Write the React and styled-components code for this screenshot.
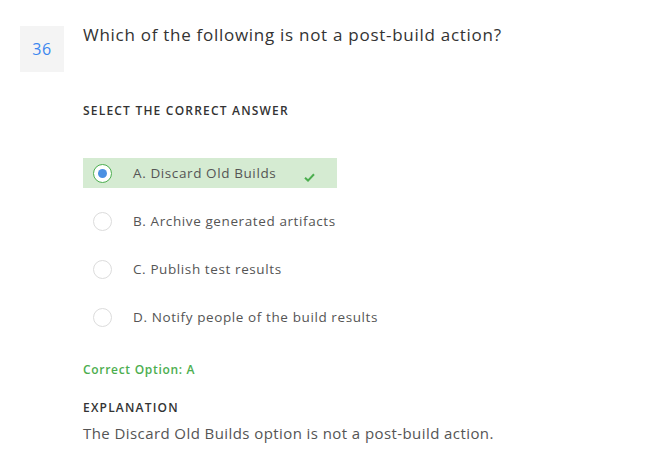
import React from 'react';
import styled, { createGlobalStyle } from 'styled-components';

const GlobalStyle = createGlobalStyle`
  body {
    margin: 0;
    background: #fff;
    font-family: 'Open Sans', 'Liberation Sans', sans-serif;
  }
`;

const Page = styled.div`
  padding: 26px 20px 20px 20px;
`;

const QuestionRow = styled.div`
  display: flex;
  align-items: flex-start;
`;

const NumberBox = styled.div`
  width: 44px;
  height: 46px;
  background: #f4f4f4;
  color: #3b86ef;
  font-size: 16px;
  letter-spacing: 0.5px;
  display: flex;
  align-items: center;
  justify-content: center;
  flex-shrink: 0;
`;

const QuestionText = styled.h1`
  margin: -3px 0 0 19px;
  font-size: 17px;
  font-weight: 400;
  color: #333;
  line-height: 24px;
  letter-spacing: 0.72px;
`;

const Body = styled.div`
  padding-left: 63px;
`;

const Label = styled.div`
  font-size: 12px;
  font-weight: 600;
  color: #333;
  text-transform: uppercase;
  letter-spacing: 1.2px;
  margin-top: ${(p) => p.$top}px;
`;

const Options = styled.div`
  display: flex;
  flex-direction: column;
  align-items: flex-start;
  gap: 18px;
  margin-top: 39px;
`;

const Option = styled.div`
  display: flex;
  align-items: center;
  height: 30px;
  padding: 0 22px 0 10px;
  background: ${(p) => (p.$correct ? '#d5ebd2' : 'transparent')};
`;

const Radio = styled.span`
  width: 19px;
  height: 19px;
  border-radius: 50%;
  box-sizing: border-box;
  border: 1px solid ${(p) => (p.$checked ? '#4cae4f' : '#dcdcdc')};
  background: #fff;
  display: flex;
  align-items: center;
  justify-content: center;
  flex-shrink: 0;

  &::after {
    content: '';
    display: ${(p) => (p.$checked ? 'block' : 'none')};
    width: 9px;
    height: 9px;
    border-radius: 50%;
    background: #4a90e2;
  }
`;

const OptionText = styled.span`
  margin-left: 21px;
  font-size: 13.5px;
  color: #555;
  letter-spacing: 0.6px;
`;

const Check = styled.svg`
  margin-left: 28px;
  margin-top: 8px;
`;

const CorrectNote = styled.div`
  margin-top: 29px;
  font-size: 12px;
  font-weight: 600;
  color: #4cae4f;
  letter-spacing: 0.7px;
`;

const Explanation = styled.p`
  margin: 7px 0 0 0;
  font-size: 15px;
  color: #555;
  letter-spacing: 0.42px;
`;

const options = [
  { key: 'A', text: 'Discard Old Builds', correct: true },
  { key: 'B', text: 'Archive generated artifacts' },
  { key: 'C', text: 'Publish test results' },
  { key: 'D', text: 'Notify people of the build results' },
];

export default function App() {
  return (
    <>
      <GlobalStyle />
      <Page>
        <QuestionRow>
          <NumberBox>36</NumberBox>
          <QuestionText>Which of the following is not a post-build action?</QuestionText>
        </QuestionRow>
        <Body>
          <Label $top={30}>Select the correct answer</Label>
          <Options>
            {options.map((o) => (
              <Option key={o.key} $correct={o.correct}>
                <Radio $checked={o.correct} />
                <OptionText>
                  {o.key}. {o.text}
                </OptionText>
                {o.correct && (
                  <Check width="11" height="9" viewBox="0 0 11 9">
                    <path d="M1 4.8 L4 7.6 L10 1.2" fill="none" stroke="#4cae4f" strokeWidth="2" />
                  </Check>
                )}
              </Option>
            ))}
          </Options>
          <CorrectNote>Correct Option: A</CorrectNote>
          <Label $top={21}>Explanation</Label>
          <Explanation>The Discard Old Builds option is not a post-build action.</Explanation>
        </Body>
      </Page>
    </>
  );
}
